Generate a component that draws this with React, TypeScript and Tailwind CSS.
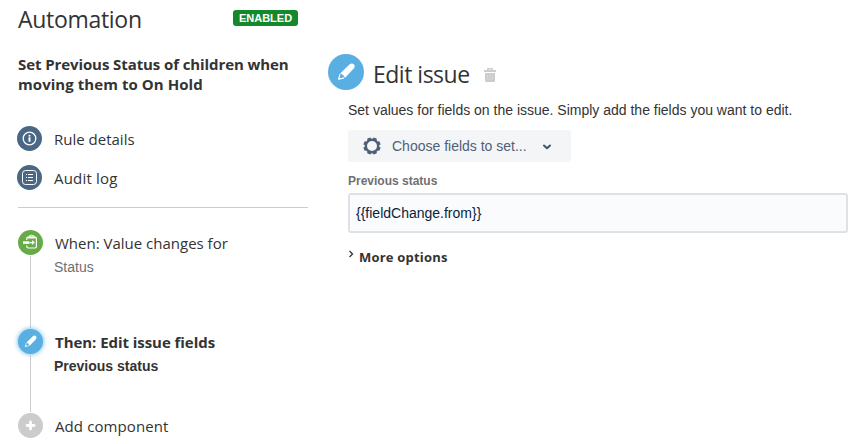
import React from "react";

const Pencil = ({ size }: { size: number }) => (
  <svg width={size} height={size} viewBox="0 0 36 36">
    <path d="M12.2 19.6 21.4 10.6Q23.6 8.6 25.8 10.2Q27.6 12.2 25.8 14.6L16.8 24Q16 21 12.2 19.6Z" fill="#fff" />
    <path d="M12 20.2 10.6 25.2 16 23.9" stroke="#fff" strokeWidth="1.1" strokeLinejoin="round" fill="none" />
    <path d="M10.4 25.5 11 23.4 12.6 25Z" fill="#fff" />
  </svg>
);

const Info = () => (
  <svg width="25" height="25" viewBox="0 0 25 25" fill="none">
    <circle cx="12.5" cy="12.5" r="6.3" stroke="#fff" strokeWidth="1.3" />
    <circle cx="12.5" cy="9.7" r="1" fill="#fff" />
    <path d="M12.5 11.3v4.4" stroke="#fff" strokeWidth="2" />
  </svg>
);

const Log = () => (
  <svg width="25" height="25" viewBox="0 0 25 25" fill="none" stroke="#fff">
    <rect x="5.5" y="5.5" width="14" height="14" rx="3" strokeWidth="1" />
    <path d="M9 9.5h1M11 9.5h5M9 12.5h1M11 12.5h5M9 15.5h1M11 15.5h5" strokeWidth="1" />
  </svg>
);

const FieldChange = () => (
  <svg width="25" height="25" viewBox="0 0 25 25" fill="none" stroke="#fff">
    <path d="M8.8 10V8.4Q8.8 7.2 10 7.2H17Q18.4 7.2 18.4 8.6V16.6Q18.4 18 17 18H10.2Q8.8 18 8.8 16.8V15.4" strokeWidth="1.2" />
    <path d="M10 8 10.8 6.4Q11.4 5.5 12.5 5.6Q13.6 4.8 14.7 5.6Q16 5.5 16.5 6.4L17.3 8Z" strokeWidth="1" fill="#fff" fillOpacity=".35" />
    <path d="M5 12.6h6.5" strokeWidth="2.6" />
    <path d="M12 12.6H16M14.1 10.8 16 12.6 14.1 14.4" strokeWidth="1.2" />
  </svg>
);

const Plus = () => (
  <svg width="25" height="25" viewBox="0 0 25 25" fill="none">
    <path d="M12.5 9v7M9 12.5h7" stroke="#fff" strokeWidth="2.8" strokeLinecap="round" />
  </svg>
);

const Gear = () => (
  <svg width="18" height="18" viewBox="0 0 18 18" fill="none" stroke="#505f79">
    <circle cx="9" cy="9" r="6.2" strokeWidth="2.4" />
    <circle cx="9" cy="9" r="7.6" strokeWidth="2.2" pathLength="80" strokeDasharray="6 4" strokeDashoffset="-2" />
  </svg>
);

const Trash = () => (
  <svg width="12" height="14" viewBox="0 0 12 14" fill="none">
    <path d="M3.8 2V.8h4.4V2" stroke="#ccc" strokeWidth="1.4" />
    <path d="M0 3h12" stroke="#ccc" strokeWidth="2" />
    <path d="M1 5h10V12.5q0 1.5-1.5 1.5H2.5Q1 14 1 12.5Z" fill="#ccc" />
    <path d="M3.6 6.5v5.5M6 6.5v5.5M8.4 6.5v5.5" stroke="#dedede" strokeWidth=".7" />
  </svg>
);

const disc = "size-[25px] shrink-0 rounded-full";

export default function App() {
  return (
    <div className="flex h-[444px] w-[852px] overflow-hidden bg-white font-['Open_Sans','Noto_Sans',sans-serif] text-[#333]">
      <aside className="w-[308px] shrink-0 pl-[18px]">
        <header className="flex h-[52px] items-start justify-between pr-[10px]">
          <h1 className="mt-[3px] text-[23px] leading-8 font-normal tracking-[-0.3px] whitespace-nowrap">Automation</h1>
          <span className="mt-[10px] flex h-4 w-[65px] items-center justify-center rounded-[3px] bg-[#14892c] font-['Liberation_Sans',sans-serif] text-[11px] font-bold text-white">ENABLED</span>
        </header>
        <h2 className="mt-[2px] text-[15px] leading-5 font-bold tracking-[-0.09px] whitespace-nowrap">
          Set Previous Status of children when<br /><span className="tracking-[0.06px]">moving them to On Hold</span>
        </h2>
        <nav className="-ml-px mt-8 flex flex-col gap-[14px] text-[15px]">
          <a className="flex h-[25px] items-center gap-3"><span className={`${disc} bg-[#4a6785]`}><Info /></span><span className="pt-0.5">Rule details</span></a>
          <a className="flex h-[25px] items-center gap-3"><span className={`${disc} bg-[#4a6785]`}><Log /></span><span className="pt-0.5 tracking-[0.2px]">Audit log</span></a>
        </nav>
        <div className="mt-[17px] h-px w-[290px] bg-[#ccc]" />
        <ol className="mt-[22px] text-[15px]">
          <li className="flex h-[99px] gap-3">
            <div className="flex w-[25px] flex-col items-center">
              <span className={`${disc} bg-[#67ab49]`}><FieldChange /></span>
              <span className="mt-px mb-px w-px grow bg-[#ccc]" />
            </div>
            <div>
              <p className="h-[26px] leading-[27px] whitespace-nowrap">When: Value changes for</p>
              <p className="-ml-px font-['Liberation_Sans',sans-serif] text-sm leading-[22px] text-[#707070]">Status</p>
            </div>
          </li>
          <li className="flex h-[84px] gap-3">
            <div className="flex w-[25px] flex-col items-center">
              <span className={`${disc} bg-[#59afe1] shadow-[0_0_5px_#59afe1]`}><Pencil size={25} /></span>
              <span className="mt-px mb-px w-px grow bg-[#ccc]" />
            </div>
            <div className="font-bold">
              <p className="h-[26px] leading-[27px] tracking-[-0.05px] whitespace-nowrap">Then: Edit issue fields</p>
              <p className="-ml-px font-['Liberation_Sans',sans-serif] text-sm leading-[22px]">Previous status</p>
            </div>
          </li>
          <li className="flex gap-3">
            <span className={`${disc} bg-[#ccc]`}><Plus /></span>
            <p className="leading-[27px] tracking-[0.1px] whitespace-nowrap">Add component</p>
          </li>
        </ol>
      </aside>
      <main className="ml-5 w-[520px] pt-[54px]">
        <div className="flex h-9 items-center">
          <span className="size-9 shrink-0 rounded-full bg-[#59afe1]"><Pencil size={36} /></span>
          <h2 className="mt-[3px] ml-[9px] w-[97px] text-[23px] leading-8 tracking-[-0.5px] whitespace-nowrap">Edit issue</h2>
          <span className="mt-[5px] ml-[14px]"><Trash /></span>
        </div>
        <div className="ml-5 font-['Liberation_Sans',sans-serif]">
          <p className="mt-[10px] text-sm leading-5 whitespace-nowrap">Set values for fields on the issue. Simply add the fields you want to edit.</p>
          <button className="mt-[10px] flex h-8 w-[223px] items-center rounded-[3px] bg-[#f4f5f7] pl-[15px] text-sm text-[#505f79]">
            <Gear />
            <span className="ml-[11px] whitespace-nowrap">Choose fields to set...</span>
            <svg className="mt-px ml-[14px]" width="12" height="8" viewBox="0 0 12 8" fill="none"><path d="M3 2.5 6 5.2 9 2.5" stroke="#42526e" strokeWidth="2" strokeLinecap="round" strokeLinejoin="round" /></svg>
          </button>
          <p className="mt-[11px] text-xs leading-4 font-bold text-[#707070]">Previous status</p>
          <div className="mt-1 flex h-10 w-[500px] items-center rounded-[3px] border-2 border-[#dfe1e6] bg-[#fafbfc] px-[6px] text-sm text-[#091e42]">{"{{fieldChange.from}}"}</div>
        </div>
        <div className="mt-[14px] ml-5 flex h-5 items-center">
          <svg className="-mt-[7px]" width="7" height="8" viewBox="0 0 7 8" fill="none"><path d="M1.5 1 4.5 4 1.5 7" stroke="#333" strokeWidth="1.3" /></svg>
          <span className="ml-1 pt-0.5 text-[13px] font-bold tracking-[0.2px] whitespace-nowrap">More options</span>
        </div>
      </main>
    </div>
  );
}
